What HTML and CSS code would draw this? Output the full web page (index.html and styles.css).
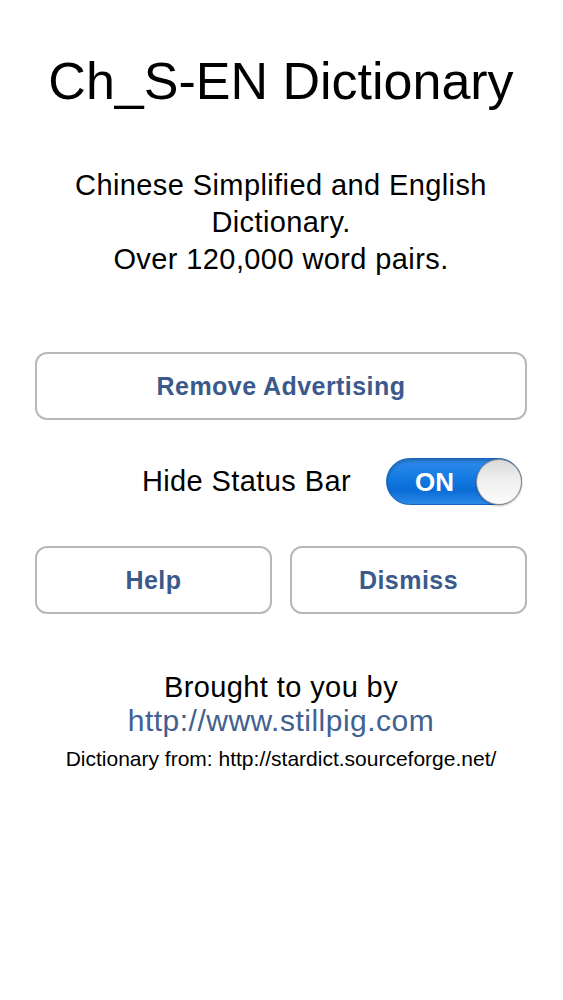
FILE: index.html
```html
<!DOCTYPE html>
<html lang="en">
<head>
<meta charset="utf-8">
<title>Ch_S-EN Dictionary</title>
<link rel="stylesheet" href="styles.css">
</head>
<body>
<main class="page">
  <h1 class="title">Ch_S-EN Dictionary</h1>
  <p class="intro">Chinese Simplified and English<br>Dictionary.<br>Over 120,000 word pairs.</p>

  <button class="btn btn-wide" type="button">Remove Advertising</button>

  <div class="setting">
    <span class="setting-label">Hide Status Bar</span>
    <div class="switch" role="switch" aria-checked="true">
      <span class="switch-text">ON</span>
      <span class="switch-knob"></span>
    </div>
  </div>

  <div class="btn-row">
    <button class="btn" type="button">Help</button>
    <button class="btn" type="button">Dismiss</button>
  </div>

  <div class="credits">
    <p class="credits-by">Brought to you by</p>
    <a class="credits-link" href="#">http://www.stillpig.com</a>
    <p class="credits-source">Dictionary from: http://stardict.sourceforge.net/</p>
  </div>
</main>
</body>
</html>
```
FILE: styles.css
```css
html, body {
  margin: 0;
  padding: 0;
  background: #ffffff;
}

body {
  font-family: "Liberation Sans", Arial, Helvetica, sans-serif;
  color: #000000;
}

.page {
  padding: 0 36px 0 35px;
  display: flex;
  flex-direction: column;
}

.title {
  margin: 51px 0 0;
  font-size: 52px;
  line-height: 60px;
  font-weight: normal;
  text-align: center;
}

.intro {
  margin: 56px 0 0;
  font-size: 29px;
  letter-spacing: 0.4px;
  line-height: 37px;
  text-align: center;
}

.btn {
  box-sizing: border-box;
  height: 68px;
  width: 100%;
  margin: 0;
  padding: 0;
  background: #ffffff;
  border: 2px solid #b8b8b8;
  border-radius: 12px;
  font-family: "Liberation Sans", Arial, Helvetica, sans-serif;
  font-size: 25px;
  font-weight: bold;
  letter-spacing: 0.45px;
  color: #3b5a8b;
  display: flex;
  align-items: center;
  justify-content: center;
}

.btn-wide {
  margin-top: 74px;
}

.setting {
  margin-top: 38px;
  height: 47px;
  display: flex;
  align-items: center;
  justify-content: flex-end;
  gap: 35px;
  padding-right: 5px;
}

.setting-label {
  font-size: 29px;
  letter-spacing: 0.4px;
  line-height: 37px;
}

.switch {
  box-sizing: border-box;
  width: 136px;
  height: 47px;
  border-radius: 24px;
  border: 1px solid #1563bd;
  background: linear-gradient(to bottom, #2f8bea 0%, #1279e0 45%, #0a6cd6 70%, #2c8ae8 100%);
  box-shadow: inset 0 2px 3px rgba(0, 0, 0, 0.25);
  display: flex;
  align-items: center;
}

.switch-text {
  flex: 1;
  text-align: center;
  padding-left: 6px;
  color: #ffffff;
  font-size: 26px;
  font-weight: bold;
  line-height: 30px;
}

.switch-knob {
  box-sizing: border-box;
  width: 46px;
  height: 46px;
  margin-right: -1px;
  border-radius: 50%;
  border: 1px solid #8d8d8d;
  background: linear-gradient(to bottom, #d9d9d9 0%, #efefef 45%, #fbfbfb 100%);
  box-shadow: 0 1px 2px rgba(0, 0, 0, 0.3);
}

.btn-row {
  margin-top: 41px;
  display: grid;
  grid-template-columns: 1fr 1fr;
  gap: 18px;
}

.credits {
  margin-top: 56px;
  display: flex;
  flex-direction: column;
  align-items: center;
  text-align: center;
}

.credits-by {
  margin: 0;
  font-size: 29px;
  letter-spacing: 0.4px;
  line-height: 34px;
}

.credits-link {
  font-size: 30px;
  letter-spacing: 0.5px;
  line-height: 34px;
  color: #41618f;
  text-decoration: none;
}

.credits-source {
  margin: 8px 0 0;
  font-size: 21px;
  line-height: 26px;
}
```
